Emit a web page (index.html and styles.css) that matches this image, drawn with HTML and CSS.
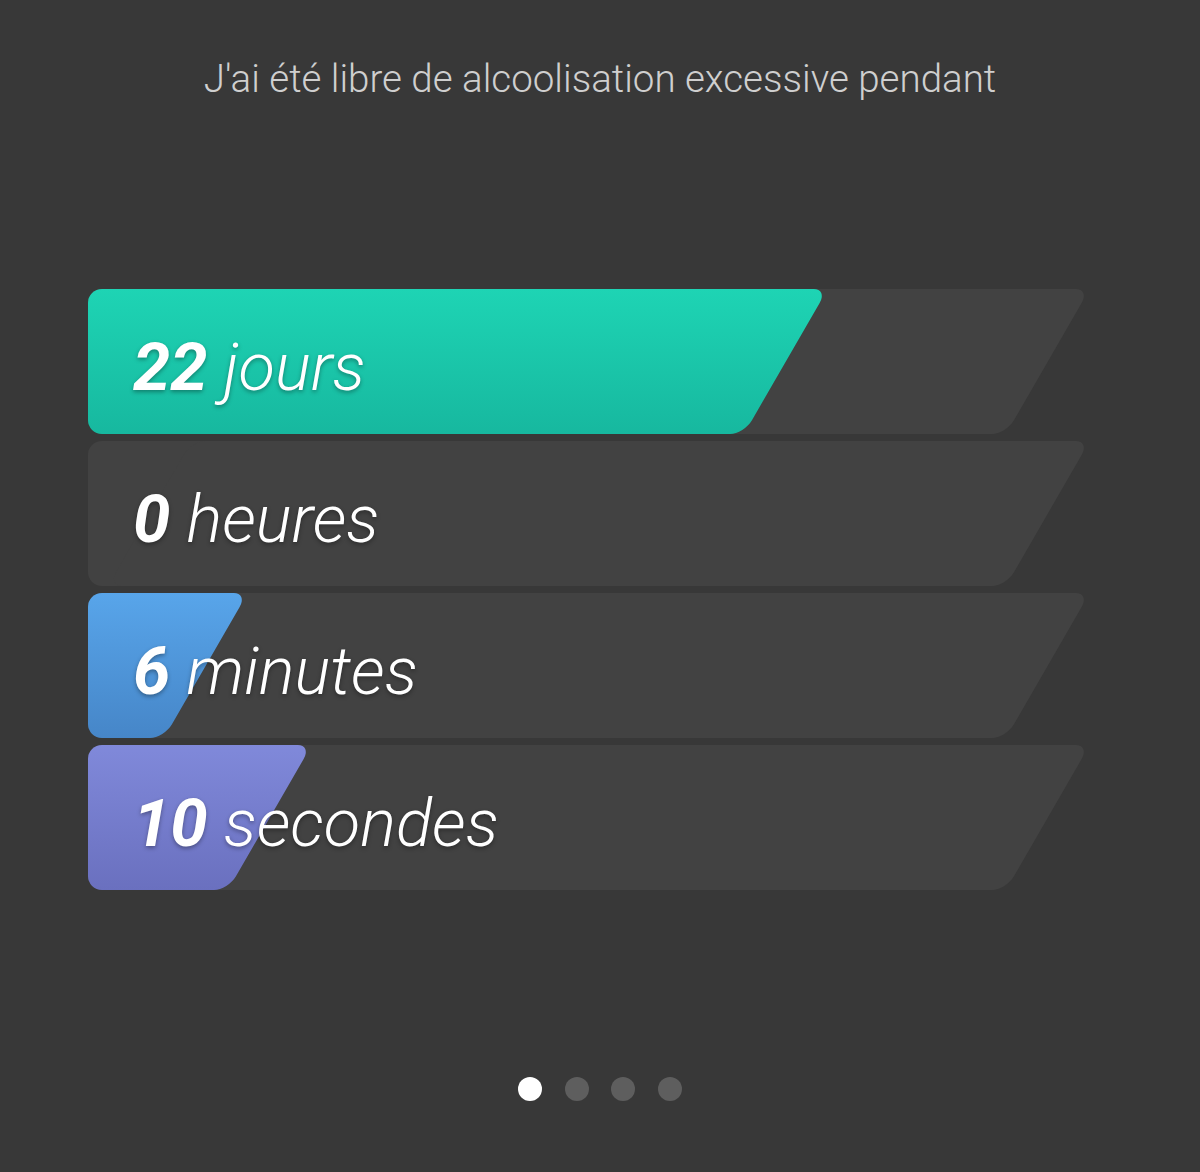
FILE: index.html
```html
<!DOCTYPE html>
<html lang="fr">
<head>
    <meta charset="UTF-8">
    <meta name="viewport" content="width=device-width, initial-scale=1.0">
    <title>Compteur</title>
    <link rel="stylesheet" href="styles.css">
</head>
<body>

    <div class="screen">
        <h1 class="title">J'ai été libre de alcoolisation excessive pendant</h1>

        <!-- Counter bars -->
        <div class="bars">
            <div class="bar">
                <div class="track"></div>
                <div class="fill fill-days"><span style="width: 856px;"></span></div>
                <p class="label"><strong>22</strong> jours</p>
            </div>
            <div class="bar">
                <div class="track"></div>
                <p class="label"><strong>0</strong> heures</p>
            </div>
            <div class="bar">
                <div class="track"></div>
                <div class="fill fill-minutes"><span style="width: 276px;"></span></div>
                <p class="label"><strong>6</strong> minutes</p>
            </div>
            <div class="bar">
                <div class="track"></div>
                <div class="fill fill-seconds"><span style="width: 340px;"></span></div>
                <p class="label"><strong>10</strong> secondes</p>
            </div>
        </div>

        <!-- Page dots -->
        <div class="dots">
            <span class="dot active"></span>
            <span class="dot"></span>
            <span class="dot"></span>
            <span class="dot"></span>
        </div>
    </div>

</body>
</html>
```

FILE: styles.css
```css
/* Global Styles */
body {
    margin: 0;
    padding: 0;
    background: #383838;
    font-family: Roboto, "Noto Sans", sans-serif;
    color: #fff;
}

.screen {
    width: 1200px;
    height: 1172px;
    display: flex;
    flex-direction: column;
    align-items: center;
}

.title {
    margin: 56px 0 0;
    font-size: 38.5px;
    font-weight: 300;
    color: #cfcfcf;
}

/* Bars */
.bars {
    margin-top: 188px;
    width: 1024px;
    display: flex;
    flex-direction: column;
    gap: 7px;
    padding-left: 88px;
    align-self: flex-start;
}

.bar {
    position: relative;
    width: 996px;
    height: 145px;
    display: flex;
    align-items: center;
}

/* straight left part + slanted right part */
.track {
    position: absolute;
    inset: 0;
}

.track::before,
.track::after {
    content: "";
    position: absolute;
    top: 0;
    bottom: 0;
    background: #424242;
}

.track::before {
    left: 0;
    width: 120px;
    border-radius: 14px 0 0 14px;
}

.track::after {
    left: 20px;
    width: 898px;
    border-radius: 14px;
    transform: skewX(-30deg);
    transform-origin: bottom left;
}

.fill {
    position: absolute;
    inset: 0;
    overflow: hidden;
    border-radius: 14px 0 0 14px;
}

.fill span {
    position: absolute;
    top: 0;
    bottom: 0;
    left: -200px;
    border-radius: 14px;
    transform: skewX(-30deg);
    transform-origin: bottom left;
}

.fill-days span {
    background: linear-gradient(#1ed4b4, #17b89f);
}

.fill-minutes span {
    background: linear-gradient(#58a5ea, #4686c8);
}

.fill-seconds span {
    background: linear-gradient(#8089da, #6a70bf);
}

.label {
    position: relative;
    margin: 10px 0 0 45px;
    font-size: 67px;
    font-weight: 300;
    font-style: italic;
    color: #fff;
    text-shadow: 0 2px 4px rgba(0, 0, 0, 0.35);
}

.label strong {
    font-weight: 700;
}

/* Dots */
.dots {
    margin-top: 187px;
    display: flex;
    gap: 22.7px;
}

.dot {
    width: 24px;
    height: 24px;
    border-radius: 50%;
    background: #5e5e5e;
}

.dot.active {
    background: #fff;
}
```
